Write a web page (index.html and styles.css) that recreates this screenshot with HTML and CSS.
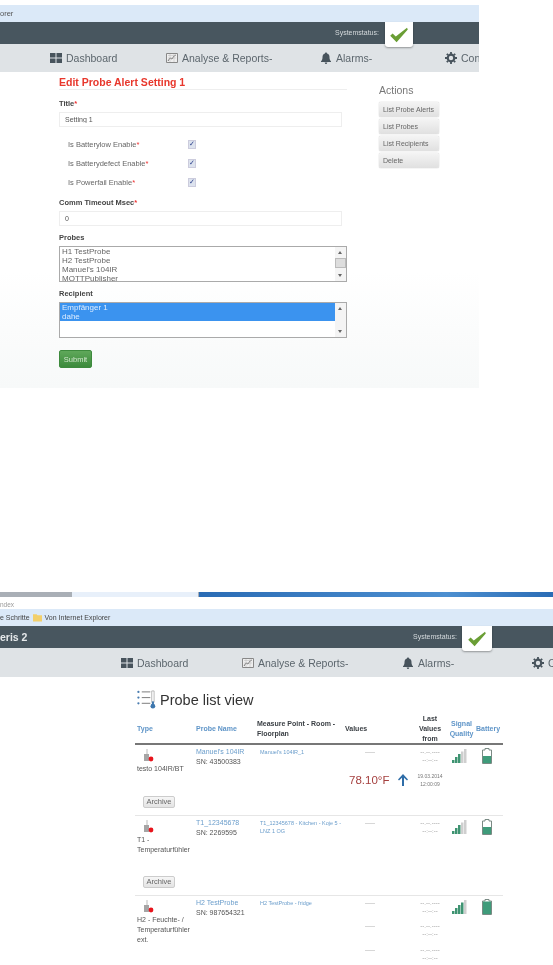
FILE: index.html
```html
<!DOCTYPE html>
<html>
<head lang="de">
    <meta charset="UTF-8">
    <title>Probe Alert</title>
    <link rel="stylesheet" href="styles.css">
</head>
<body>
<svg class="defs" width="0" height="0">
    <symbol id="i-check" viewBox="0 0 24 20"><path d="M1 11l3-3 4 4L22 1l1 2L9 19z" fill="#6a9e35"/></symbol>
    <symbol id="i-dash" viewBox="0 0 12 12"><path d="M0 1h5.500v4.500H0zM6.500 1H12v4.500H6.500zM0 6.500h5.500V11H0zM6.500 6.500H12V11H6.500z" fill="#47535c"/></symbol>
    <symbol id="i-chart" viewBox="0 0 12 12"><path d="M.5 1.500h11v9H.5z" fill="#eee" stroke="#888"/><path d="M2 9l2-3 2 1 2-3 2-1" fill="none" stroke="#777"/><path d="M2 3.500h8M2 6h8M4 2v8M8 2v8" stroke="#bbb" stroke-width=".5"/></symbol>
    <symbol id="i-bell" viewBox="0 0 12 12"><path d="M6 .5c.7 0 1 .4 1 1 2 .5 2.500 2 2.500 4 0 2 .7 3 1.500 3.800v.7H1v-.7C1.800 8.500 2.500 7.500 2.500 5.500s.5-3.500 2.500-4c0-.6.300-1 1-1zM4.700 10.500h2.600C7.200 11.400 6.700 12 6 12s-1.200-.6-1.300-1.500z" fill="#47535c"/></symbol>
    <symbol id="i-gear" viewBox="0 0 12 12"><circle cx="6" cy="6" r="3.300" fill="none" stroke="#47535c" stroke-width="2.200"/><path d="M6 0v12M0 6h12M1.800 1.800l8.400 8.400M10.200 1.800l-8.400 8.400" stroke="#47535c" stroke-width="1.800" stroke-dasharray="2 8"/></symbol>
    <symbol id="i-probe" viewBox="0 0 12 14"><path d="M4.500 0h1v5h-1z" fill="#bbb"/><path d="M2 5h5v7H2z" fill="#a5a5a5"/><circle cx="9" cy="10" r="2.400" fill="#e8141c"/></symbol>
</svg>

<div class="shot shot_one">
    <div class="favbar"><span>orer</span></div>
    <div class="topbar">
        <span class="status_text">Systemstatus:</span>
        <span class="status_tab"><svg class="status_check"><use href="#i-check"/></svg></span>
    </div>
    <nav class="mainnav mainnav_one">
        <a><svg class="nav_icon"><use href="#i-dash"/></svg>Dashboard</a>
        <a><svg class="nav_icon"><use href="#i-chart"/></svg>Analyse &amp; Reports-</a>
        <a><svg class="nav_icon"><use href="#i-bell"/></svg>Alarms-</a>
        <a><svg class="nav_icon"><use href="#i-gear"/></svg>Con</a>
    </nav>
    <div class="edit_wrap">
        <form class="edit_form">
            <h2>Edit Probe Alert Setting 1</h2>
            <label class="label">Title<i>*</i></label>
            <input class="text_input" type="text" value="Setting 1">
            <div class="checks">
                <div class="check_row"><span>Is Batterylow Enable<i>*</i></span><input type="checkbox" checked></div>
                <div class="check_row"><span>Is Batterydefect Enable<i>*</i></span><input type="checkbox" checked></div>
                <div class="check_row"><span>Is Powerfail Enable<i>*</i></span><input type="checkbox" checked></div>
            </div>
            <label class="label">Comm Timeout Msec<i>*</i></label>
            <input class="text_input" type="text" value="0">
            <label class="label">Probes</label>
            <div class="listbox">
                <ul>
                    <li>H1 TestProbe</li>
                    <li>H2 TestProbe</li>
                    <li>Manuel's 104IR</li>
                    <li>MQTTPublisher</li>
                </ul>
                <div class="scroll"><b class="up"></b><b class="thumb"></b><b class="down"></b></div>
            </div>
            <label class="label">Recipient</label>
            <div class="listbox">
                <ul>
                    <li class="sel">Empfänger 1</li>
                    <li class="sel">dahe</li>
                </ul>
                <div class="scroll"><b class="up"></b><b class="down"></b></div>
            </div>
            <button class="submit" type="button">Submit</button>
        </form>
        <aside class="actions">
            <h3>Actions</h3>
            <a class="action_btn">List Probe Alerts</a>
            <a class="action_btn">List Probes</a>
            <a class="action_btn">List Recipients</a>
            <a class="action_btn">Delete</a>
        </aside>
    </div>
</div>

<div class="shot shot_two">
    <div class="taskstrip"><span class="s1"></span><span class="s2"></span><span class="s3"></span><span class="s4"></span></div>
    <div class="addressbar">ndex</div>
    <div class="favbar favbar_two">
        <span>e Schritte</span>
        <svg class="folder" viewBox="0 0 10 9"><path d="M0 1h4l1 1h5v7H0z" fill="#f2cf6b"/></svg>
        <span>Von Internet Explorer</span>
    </div>
    <div class="topbar topbar_two">
        <span class="brand">eris 2</span>
        <span class="status_text">Systemstatus:</span>
        <span class="status_tab"><svg class="status_check"><use href="#i-check"/></svg></span>
    </div>
    <nav class="mainnav mainnav_two">
        <a><svg class="nav_icon"><use href="#i-dash"/></svg>Dashboard</a>
        <a><svg class="nav_icon"><use href="#i-chart"/></svg>Analyse &amp; Reports-</a>
        <a><svg class="nav_icon"><use href="#i-bell"/></svg>Alarms-</a>
        <a><svg class="nav_icon"><use href="#i-gear"/></svg>C</a>
    </nav>
    <h1 class="list_title">
        <svg class="list_icon" viewBox="0 0 20 20">
            <g fill="#4a7db0"><circle cx="1.500" cy="2" r="1.200"/><circle cx="1.500" cy="8" r="1.200"/><circle cx="1.500" cy="14" r="1.200"/></g>
            <path d="M5 2h9M5 8h9M5 14h9" stroke="#777" fill="none"/>
            <path d="M15.500 1h2.500v12h-2.500z" fill="#fff" stroke="#999" stroke-width=".7"/>
            <path d="M15.700 12h2.100v4h-2.100z" fill="#3f77ad"/><circle cx="16.700" cy="17" r="2.500" fill="#3f77ad"/>
        </svg>
        Probe list view
    </h1>
    <div class="probe_table">
        <div class="probe_head">
            <a>Type</a>
            <a>Probe Name</a>
            <span>Measure Point - Room - Floorplan</span>
            <span>Values</span>
            <span class="head_last">Last Values from</span>
            <a class="head_signal">Signal Quality</a>
            <a class="head_battery">Battery</a>
        </div>

        <div class="probe_row">
            <div class="probe_cols">
                <div class="col_type"><svg class="probe_icon"><use href="#i-probe"/></svg>testo 104IR/BT</div>
                <div class="col_name"><a>Manuel's 104IR</a><br>SN: 43500383</div>
                <a class="col_point">Manuel's 104IR_1</a>
                <div class="col_values">
                    <div class="value_pair"><span class="dash">-----</span><span class="last">--.--.----<br>--:--:--</span></div>
                    <div class="value_pair">
                        <span class="reading">78.10°F<svg class="arrow" viewBox="0 0 10 12"><path d="M5 0l5 5.500-1 1-3-2.800V12H4V3.700L1 6.500l-1-1z" fill="#2f6da8"/></svg></span>
                        <span class="last last_date">19.03.2014<br>12:00:09</span>
                    </div>
                </div>
                <svg class="signal" viewBox="0 0 15 14"><rect class="on" x="0" y="11" width="2.500" height="3"/><rect class="on" x="3" y="8" width="2.500" height="6"/><rect class="on" x="6" y="5" width="2.500" height="9"/><rect x="9" y="2.500" width="2.500" height="11.500"/><rect x="12" y="0" width="2.500" height="14"/></svg>
                <svg class="battery" viewBox="0 0 10 16"><path class="shell" d="M3 .5h4V2h2.500v13.500H.5V2H3z"/><rect class="charge" x="1" y="8" width="8" height="7"/></svg>
            </div>
            <button class="archive archive_one" type="button">Archive</button>
        </div>

        <div class="probe_row">
            <div class="probe_cols">
                <div class="col_type"><svg class="probe_icon"><use href="#i-probe"/></svg>T1 - Temperaturfühler</div>
                <div class="col_name"><a>T1_12345678</a><br>SN: 2269595</div>
                <a class="col_point">T1_12345678 - Kitchen - Koje 5 - LNZ 1 OG</a>
                <div class="col_values">
                    <div class="value_pair"><span class="dash">-----</span><span class="last">--.--.----<br>--:--:--</span></div>
                </div>
                <svg class="signal" viewBox="0 0 15 14"><rect class="on" x="0" y="11" width="2.500" height="3"/><rect class="on" x="3" y="8" width="2.500" height="6"/><rect class="on" x="6" y="5" width="2.500" height="9"/><rect x="9" y="2.500" width="2.500" height="11.500"/><rect x="12" y="0" width="2.500" height="14"/></svg>
                <svg class="battery" viewBox="0 0 10 16"><path class="shell" d="M3 .5h4V2h2.500v13.500H.5V2H3z"/><rect class="charge" x="1" y="8" width="8" height="7"/></svg>
            </div>
            <button class="archive archive_two" type="button">Archive</button>
        </div>

        <div class="probe_row probe_row_last">
            <div class="probe_cols">
                <div class="col_type"><svg class="probe_icon"><use href="#i-probe"/></svg>H2 - Feuchte- / Temperaturfühler ext.</div>
                <div class="col_name"><a>H2 TestProbe</a><br>SN: 987654321</div>
                <a class="col_point">H2 TestProbe - fridge</a>
                <div class="col_values">
                    <div class="value_pair"><span class="dash">-----</span><span class="last">--.--.----<br>--:--:--</span></div>
                    <div class="value_pair"><span class="dash">-----</span><span class="last">--.--.----<br>--:--:--</span></div>
                    <div class="value_pair"><span class="dash">-----</span><span class="last">--.--.----<br>--:--:--</span></div>
                </div>
                <svg class="signal" viewBox="0 0 15 14"><rect class="on" x="0" y="11" width="2.500" height="3"/><rect class="on" x="3" y="8" width="2.500" height="6"/><rect class="on" x="6" y="5" width="2.500" height="9"/><rect class="on" x="9" y="2.500" width="2.500" height="11.500"/><rect x="12" y="0" width="2.500" height="14"/></svg>
                <svg class="battery" viewBox="0 0 10 16"><path class="shell" d="M3 .5h4V2h2.500v13.500H.5V2H3z"/><rect class="charge" x="1" y="2.500" width="8" height="12.500"/></svg>
            </div>
        </div>
    </div>
</div>
</body>
</html>
```

FILE: styles.css
```css
*{
    padding: 0;
    margin: 0;
    box-sizing: border-box;
}
html, body{
    height: 965px;
    overflow: hidden;
    background: #fff;
}
body{
    font-family: "Liberation Sans", Arial, sans-serif;
    color: #555;
    filter: blur(.35px);
}
.defs{
    display: block;
    height: 0;
}

/* browser and app chrome */
.shot_one{
    width: 479px;
    padding-top: 5px;
    background: linear-gradient(#fff 70%, #f7f9f9);
}
.favbar{
    display: flex;
    align-items: center;
    gap: 2px;
    height: 17px;
    background: #dbe9f8;
    font-size: 7.5px;
    color: #555;
    white-space: nowrap;
}
.topbar{
    position: relative;
    z-index: 1;
    display: flex;
    align-items: flex-start;
    height: 22px;
    padding-left: 335px;
    background: #48565f;
}
.status_text{
    width: 50px;
    font-size: 7px;
    line-height: 22px;
    color: #d5dadd;
}
.status_tab{
    display: flex;
    align-items: center;
    justify-content: center;
    width: 28px;
    height: 25px;
    background: #fff;
    border-radius: 0 0 3px 3px;
    box-shadow: 0 1px 2px rgba(0,0,0,.35);
}
.status_check{
    width: 20px;
    height: 16px;
}
.mainnav{
    display: grid;
    align-items: center;
    overflow: hidden;
    white-space: nowrap;
    background: #dfe3e6;
    font-size: 10.500px;
    color: #5c666d;
}
.mainnav a{
    display: flex;
    align-items: center;
    gap: 4px;
}
.nav_icon{
    width: 12px;
    height: 12px;
    flex: none;
}
.mainnav_one{
    height: 28px;
    padding-left: 50px;
    grid-template-columns: 116px 154px 125px 1fr;
}
.mainnav_two{
    height: 29px;
    padding-left: 121px;
    grid-template-columns: 121px 160px 130px 1fr;
}

/* edit form */
.edit_wrap{
    display: flex;
    gap: 32px;
    padding: 0 0 20px 59px;
}
.edit_form{
    display: flex;
    flex-direction: column;
    align-items: flex-start;
    width: 288px;
}
.edit_form h2{
    width: 100%;
    height: 18px;
    margin-bottom: 2px;
    padding-top: 3px;
    border-bottom: 1px solid #eee;
    font-size: 10.500px;
    line-height: 14px;
    color: #e8372c;
}
.label{
    margin: 7px 0 3px;
    font-size: 7.500px;
    line-height: 10px;
    font-weight: bold;
    color: #444;
}
.label i, .check_row i{
    font-style: normal;
    color: #e33;
}
.text_input{
    width: 283px;
    height: 15px;
    padding-left: 5px;
    border: 1px solid #eee;
    background: #fff;
    font: 7px "Liberation Sans", Arial, sans-serif;
    color: #555;
}
.checks{
    margin: 8px 0 -1px;
}
.check_row{
    display: flex;
    align-items: center;
    height: 19px;
    padding-left: 9px;
    font-size: 7.500px;
    color: #666;
}
.check_row span{
    width: 120px;
}
.check_row input{
    appearance: none;
    position: relative;
    width: 8px;
    height: 9px;
    background: #dde3ee;
    border: 1px solid #ccd;
}
.check_row input::after{
    content: "✓";
    position: absolute;
    left: 0;
    top: -1px;
    font: bold 7px/9px "DejaVu Sans", sans-serif;
    color: #2a3f8a;
}
.listbox{
    display: flex;
    width: 288px;
    height: 36px;
    border: 1px solid #aaa;
    background: #fff;
    overflow: hidden;
}
.listbox ul{
    flex: 1;
    list-style: none;
    font-size: 8px;
    line-height: 9px;
    color: #666;
}
.listbox li{
    padding-left: 2px;
}
.listbox li.sel{
    background: #3b93ef;
    color: #dcecff;
}
.scroll{
    position: relative;
    width: 11px;
    background: #f4f4f4;
}
.scroll b{
    position: absolute;
    left: 0;
    width: 11px;
}
.scroll .up, .scroll .down{
    left: 3px;
    width: 0;
    border-left: 2.500px solid transparent;
    border-right: 2.500px solid transparent;
}
.scroll .up{
    top: 4px;
    border-bottom: 3px solid #666;
}
.scroll .down{
    bottom: 4px;
    border-top: 3px solid #666;
}
.scroll .thumb{
    top: 11px;
    height: 10px;
    background: #ddd;
    border: 1px solid #bbb;
}
.submit{
    width: 33px;
    height: 18px;
    margin-top: 12px;
    border: 1px solid #3d8a3d;
    border-radius: 2px;
    background: linear-gradient(#5fa85a, #3c8a3c);
    font: 7.500px "Liberation Sans", Arial, sans-serif;
    color: #cfe6cb;
}
.actions{
    display: flex;
    flex-direction: column;
    gap: 2px;
    width: 60px;
    padding-top: 11px;
}
.actions h3{
    margin-bottom: 3px;
    font-size: 10.500px;
    line-height: 14px;
    font-weight: normal;
    white-space: nowrap;
    color: #777;
}
.action_btn{
    height: 15px;
    padding-left: 4px;
    border-radius: 2px;
    background: linear-gradient(#f4f4f4, #e0e0e0);
    box-shadow: 0 0 1px #999;
    font-size: 7px;
    line-height: 15px;
    white-space: nowrap;
    color: #666;
}

/* second capture */
.taskstrip{
    display: flex;
    height: 5px;
    margin-top: 204px;
}
.taskstrip .s1{ width: 72px; background: #a9afb6; }
.taskstrip .s2{ width: 126px; background: #e8f0fa; }
.taskstrip .s3{ width: 1px; background: #a9afb6; }
.taskstrip .s4{ flex: 1; background: linear-gradient(90deg, #2a6cb5, #4d8fd0 70%, #2a6cb5); }
.addressbar{
    height: 12px;
    font-size: 6.500px;
    line-height: 15px;
    color: #999;
}
.favbar_two{
    color: #444;
    font-size: 7px;
}
.folder{
    width: 9px;
    height: 9px;
    margin: 0 1px;
}
.topbar_two{
    padding-left: 0;
}
.brand{
    width: 413px;
    font-size: 10.500px;
    line-height: 22px;
    font-weight: bold;
    color: #e6e9eb;
}
.topbar_two .status_text{
    width: 49px;
}
.topbar_two .status_tab{
    width: 30px;
}
.list_title{
    display: flex;
    align-items: center;
    gap: 4px;
    height: 19px;
    margin: 13px 0 5px 137px;
    font-size: 14.500px;
    font-weight: normal;
    color: #333;
}
.list_icon{
    width: 19px;
    height: 19px;
}

/* probe table */
.probe_table{
    width: 368px;
    margin-left: 135px;
}
.probe_head, .probe_cols{
    display: grid;
    grid-template-columns: 61px 61px 88px 65px 40px 23px 30px;
}
.probe_head{
    align-items: center;
    height: 31px;
    border-bottom: 2px solid #777;
    font-size: 7px;
    line-height: 10px;
    font-weight: bold;
    color: #3a3f44;
}
.probe_head a{
    color: #5f95c8;
}
.probe_head > :first-child{
    padding-left: 2px;
}
.head_last, .head_signal{
    text-align: center;
}
.head_last{
    padding: 0 6px;
}
.head_signal{
    margin-left: -3px;
    margin-right: -3px;
}
.head_battery{
    padding-left: 3px;
}
.probe_row{
    padding: 2px 0 7px;
    border-bottom: 1px solid #e6e6e6;
    font-size: 7px;
    line-height: 10px;
}
.probe_row_last{
    border-bottom: 0;
}
.col_type{
    padding-left: 2px;
}
.probe_icon{
    display: block;
    width: 12px;
    height: 14px;
    margin: 2px 0 1px 5px;
}
.col_name a{
    color: #6a9dcb;
}
.col_point{
    padding: 1px 3px 0;
    font-size: 5.500px;
    line-height: 8px;
    color: #6a9dcb;
}
.col_values{
    grid-column: span 2;
    padding-top: 1px;
}
.value_pair{
    display: grid;
    grid-template-columns: 65px 40px;
    align-items: center;
    margin-bottom: 7.500px;
}
.value_pair:last-child{
    margin-bottom: 0;
}
.dash{
    align-self: start;
    padding-left: 20px;
    font-size: 6px;
    line-height: 8px;
    color: #999;
}
.last{
    text-align: center;
    font-size: 6px;
    line-height: 8px;
    color: #999;
}
.last_date{
    font-size: 5px;
    color: #777;
}
.reading{
    display: flex;
    align-items: center;
    gap: 9px;
    padding-left: 4px;
    font-size: 11.500px;
    white-space: nowrap;
    color: #a5403f;
}
.arrow{
    flex: none;
    width: 10px;
    height: 12px;
}
.signal{
    width: 15px;
    height: 14px;
    margin: 2px 0 0 2px;
}
.signal rect{
    fill: #cfcfcf;
}
.signal rect.on{
    fill: #3f9472;
}
.battery{
    width: 10px;
    height: 16px;
    margin: 1px 0 0 9px;
}
.shell{
    fill: #fff;
    stroke: #7a8a84;
}
.charge{
    fill: #3f9b7a;
}
.archive{
    display: block;
    width: 32px;
    height: 12px;
    margin-left: 8px;
    border: 1px solid #ccc;
    border-radius: 2px;
    background: linear-gradient(#f6f6f6, #e4e4e4);
    font: 7.500px "Liberation Sans", Arial, sans-serif;
    color: #666;
}
.archive_one{
    margin-top: 8px;
}
.archive_two{
    margin-top: 21px;
}
```
